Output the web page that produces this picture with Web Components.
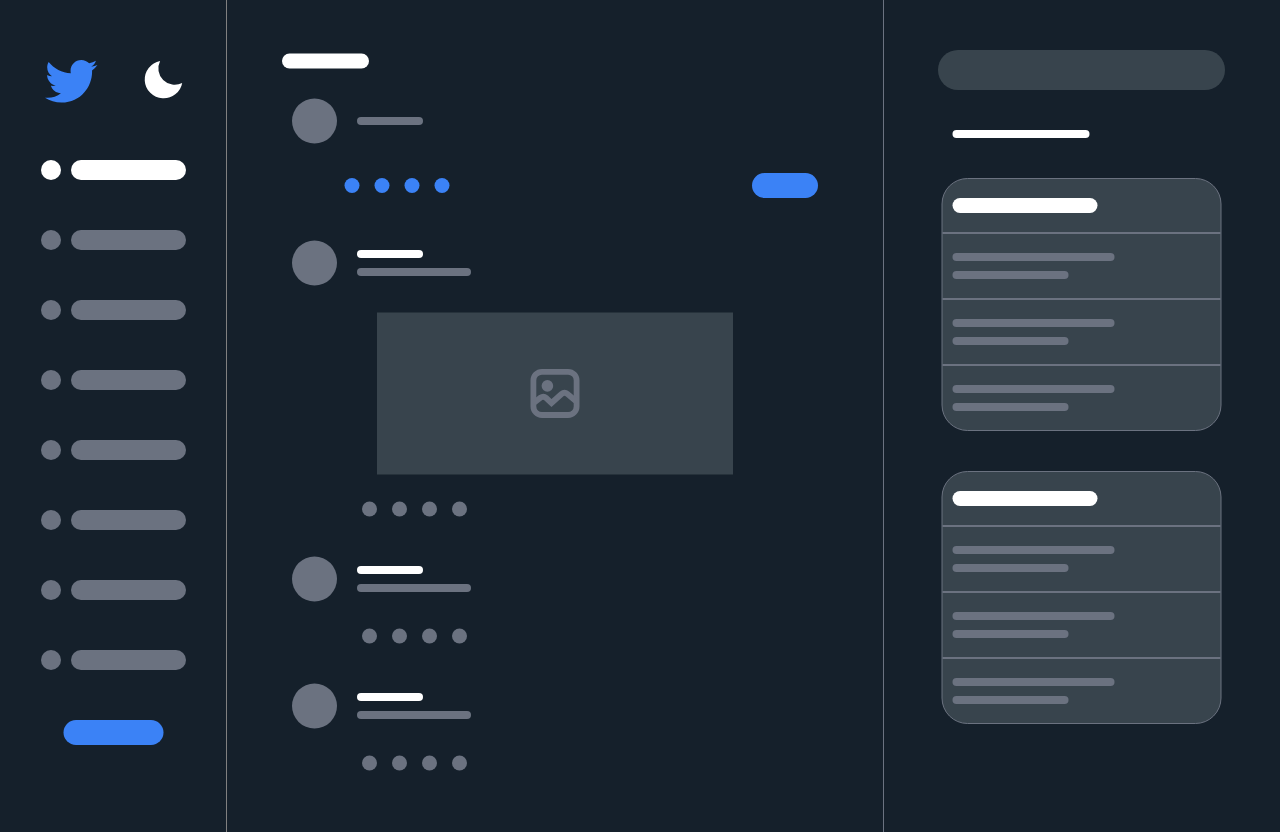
<!DOCTYPE html>
<html lang="en">
<head>
<meta charset="utf-8">
<title>Feed skeleton</title>
<style>
html,body{margin:0;height:100%;background:#15202b;overflow:hidden}
body{font-family:"Liberation Sans",sans-serif;
--ink:#fff;--mute:#6b7280;--accent:#3b82f6;--panel:#38444d;--bg:#15202b}
</style>
</head>
<body>
<feed-app></feed-app>
<script>
const define = (name, html) => customElements.define(name, class extends HTMLElement {
  constructor() {
    super();
    const t = document.createElement('template');
    t.innerHTML = html;
    this.attachShadow({mode: 'open'}).append(t.content.cloneNode(true));
  }
});

// Pill or dot placeholder; size and colour come from custom properties.
define('sk-shape', `<style>
:host{display:block;flex:none;box-sizing:border-box;width:var(--w);height:var(--h);border-radius:calc(var(--h)/2);background:var(--c,var(--mute))}
</style>`);

define('bird-logo', `<style>:host{display:block;width:52px;height:52px}svg{display:block;overflow:visible}</style>
<svg width="52" height="52" viewBox="0 0 52 52"><path transform="scale(.1024)" fill="#3b82f6" d="M459.37 151.716c.325 4.548.325 9.097.325 13.645 0 138.72-105.583 298.558-298.558 298.558-59.452 0-114.68-17.219-161.137-47.106 8.447.974 16.568 1.299 25.34 1.299 49.055 0 94.213-16.568 130.274-44.832-46.132-.975-84.792-31.188-98.112-72.772 6.498.974 12.995 1.624 19.818 1.624 9.421 0 18.843-1.3 27.614-3.573-48.081-9.747-84.143-51.98-84.143-102.985v-1.299c13.969 7.797 30.214 12.67 47.431 13.319-28.264-18.843-46.781-51.005-46.781-87.391 0-19.492 5.197-37.36 14.294-52.954 51.655 63.675 129.3 105.258 216.365 109.807-1.624-7.797-2.599-15.918-2.599-24.04 0-57.828 46.782-104.934 104.934-104.934 30.213 0 57.502 12.67 76.67 33.137 23.715-4.548 46.456-13.32 66.599-25.34-7.798 24.366-24.366 44.833-46.132 57.827 21.117-2.273 41.584-8.122 60.426-16.243-14.292 20.791-32.161 39.308-52.628 54.253z"/></svg>`);

define('moon-icon', `<style>:host{display:block;width:40px;height:40px}svg{display:block}</style>
<svg width="40" height="40" viewBox="0 0 40 40"><path fill="#fff" d="M17.1 .9A18.9 18.9 0 1 0 39.2 22.9A16.4 16.4 0 0 1 17.1 .9Z"/></svg>`);

define('image-icon', `<style>:host{display:block;width:50px;height:50px}svg{display:block}</style>
<svg width="50" height="50" viewBox="0 0 50 50" fill="none" stroke="#6b7280" stroke-width="5.8"><rect x="3.4" y="3.3" width="43.2" height="43.2" rx="8.5"/><circle cx="17.4" cy="17.4" r="5.8" fill="#6b7280" stroke="none"/><path d="M3 35L10.5 29.1Q13.5 27 16.2 29.5L21.5 34.5L31.5 25.5Q34.5 23 37.5 25.5L47 33.5"/></svg>`);

define('nav-item', `<style>
:host{display:flex;gap:10px;height:20px;--c:var(--mute)}
:host([active]){--c:var(--ink)}
</style><sk-shape style="--w:20px;--h:20px"></sk-shape><sk-shape style="--w:115px;--h:20px"></sk-shape>`);

define('side-nav', `<style>
:host{display:block;box-sizing:border-box;padding:55px 0 0 41px;border-right:1px solid #808080}
header{display:flex;height:105px}
bird-logo{margin-left:4px}
moon-icon{margin:5px 0 0 46px}
nav{display:flex;flex-direction:column;gap:50px}
sk-shape{margin:50px 0 0 22px;transform:translateX(.5px)}
</style>
<header><bird-logo></bird-logo><moon-icon></moon-icon></header>
<nav><nav-item active></nav-item>${'<nav-item></nav-item>'.repeat(7)}</nav>
<sk-shape style="--w:100px;--h:25px;--c:var(--accent)"></sk-shape>`);

define('action-dots', `<style>:host{display:flex;gap:15px}</style>
${'<sk-shape style="--w:15px;--h:15px"></sk-shape>'.repeat(4)}`);

define('user-row', `<style>
:host{display:flex;gap:20px;align-items:center;height:45px}
.avatar{transform:translateY(.5px)}
.lines{display:flex;flex-direction:column;gap:10px}
</style><sk-shape class="avatar" style="--w:45px;--h:45px"></sk-shape><div class="lines"><slot></slot></div>`);

define('feed-post', `<style>
:host{display:block}
.line{--w:114px;--h:8px}.name{--w:66px;--h:8px;--c:var(--ink)}
action-dots{margin:27px 0 0 70px;transform:translateY(.5px)}
</style><user-row><sk-shape class="name"></sk-shape><sk-shape class="line"></sk-shape></user-row>
<slot></slot><action-dots></action-dots>`);

define('media-box', `<style>
:host{display:flex;width:356px;height:162px;margin:27px 0 0 85px;background:var(--panel);align-items:center;justify-content:center;transform:translateY(.5px)}
</style><image-icon></image-icon>`);

define('feed-column', `<style>
:host{display:block;box-sizing:border-box;padding:53px 65px 0;border-right:1px solid #6b7280}
.title{--w:87px;--h:15px;--c:var(--ink);margin-left:-10px;transform:translateY(.5px)}
.compose{margin-top:30px}
.tools{display:flex;align-items:center;justify-content:space-between;margin:30px 0 42px 52px;height:25px}
.tools action-dots{--c:var(--accent);transform:translateX(.5px)}
.posts{display:flex;flex-direction:column;gap:40px}
</style>
<sk-shape class="title"></sk-shape>
<user-row class="compose"><sk-shape style="--w:66px;--h:8px"></sk-shape></user-row>
<div class="tools"><action-dots></action-dots><sk-shape style="--w:66px;--h:25px;--c:var(--accent)"></sk-shape></div>
<div class="posts"><feed-post><media-box></media-box></feed-post><feed-post></feed-post><feed-post></feed-post></div>`);

define('trend-row', `<style>
:host{display:flex;flex-direction:column;gap:10px;border-top:2px solid var(--mute);padding:19px 10px}
</style><sk-shape style="--w:162px;--h:8px"></sk-shape><sk-shape style="--w:116px;--h:8px"></sk-shape>`);

define('trend-card', `<style>
:host{display:block;box-sizing:border-box;width:280px;border:1px solid var(--mute);border-radius:26px;background:var(--panel);transform:translateX(.5px)}
.head{--w:145px;--h:15px;--c:var(--ink);margin:19px 10px}
</style><sk-shape class="head"></sk-shape>${'<trend-row></trend-row>'.repeat(3)}`);

define('trend-column', `<style>
:host{display:block;padding:50px 54px 0}
.search{--w:287px;--h:40px;--c:var(--panel)}
.label{--w:137px;--h:8px;--c:var(--ink);margin:40px 0 40px 14px;transform:translateX(.5px)}
.cards{display:flex;flex-direction:column;gap:40px;margin-left:3px}
</style><sk-shape class="search"></sk-shape><sk-shape class="label"></sk-shape>
<div class="cards"><trend-card></trend-card><trend-card></trend-card></div>`);

define('feed-app', `<style>
:host{display:grid;grid-template-columns:227px 657px 1fr;height:832px;background:var(--bg)}
</style><side-nav></side-nav><feed-column></feed-column><trend-column></trend-column>`);
</script>
</body>
</html>
